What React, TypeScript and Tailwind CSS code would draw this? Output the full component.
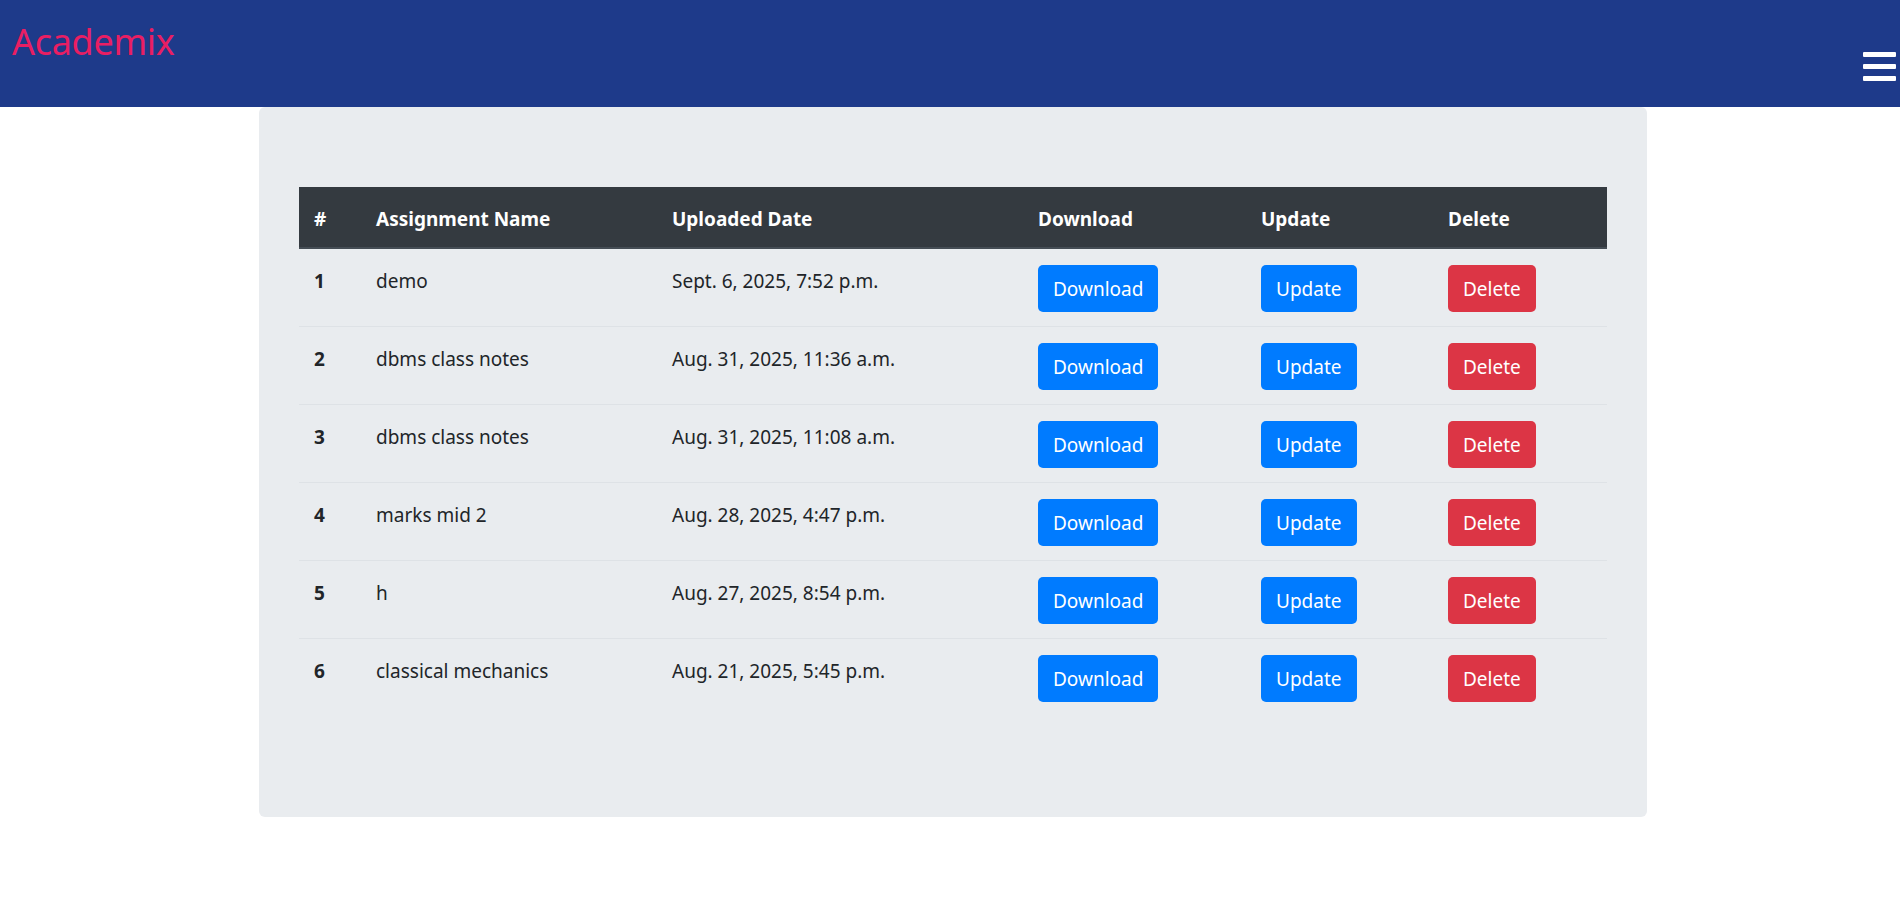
const rows = [
  { id: 1, name: 'demo', date: 'Sept. 6, 2025, 7:52 p.m.' },
  { id: 2, name: 'dbms class notes', date: 'Aug. 31, 2025, 11:36 a.m.' },
  { id: 3, name: 'dbms class notes', date: 'Aug. 31, 2025, 11:08 a.m.' },
  { id: 4, name: 'marks mid 2', date: 'Aug. 28, 2025, 4:47 p.m.' },
  { id: 5, name: 'h', date: 'Aug. 27, 2025, 8:54 p.m.' },
  { id: 6, name: 'classical mechanics', date: 'Aug. 21, 2025, 5:45 p.m.' },
];

export default function App() {
  return (
    <div className="min-h-screen bg-white font-['Noto_Sans',sans-serif] text-[#212529]">
      {/* Navbar */}
      <header className="flex h-[107px] items-start justify-between bg-[#1e3a8a]">
        <div className="pl-[12px] pt-[14px] text-[36px] leading-[56px] tracking-[-0.3px] text-[#e91e63]">Academix</div>
        <button className="mr-[4px] mt-[52px] flex flex-col gap-[7px]">
          <span className="block h-[5px] w-[33px] rounded-[1px] bg-white" />
          <span className="block h-[5px] w-[33px] rounded-[1px] bg-white" />
          <span className="block h-[5px] w-[33px] rounded-[1px] bg-white" />
        </button>
      </header>

      {/* Card */}
      <div className="ml-[259px] w-[1388px] rounded-[6px] bg-[#e9ecef] px-[40px] pb-[101px] pt-[80px]">
        <table className="w-[1308px] table-fixed border-collapse text-[19px] leading-[30px]">
          <colgroup>
            <col className="w-[62px]" />
            <col className="w-[296px]" />
            <col className="w-[366px]" />
            <col className="w-[223px]" />
            <col className="w-[187px]" />
            <col className="w-[174px]" />
          </colgroup>
          <thead>
            <tr className="border-b-2 border-[#454d55] bg-[#343a40] text-left font-bold text-white">
              <th className="px-[15px] pb-[13px] pt-[17px]">#</th>
              <th className="px-[15px] pb-[13px] pt-[17px]">Assignment Name</th>
              <th className="px-[15px] pb-[13px] pt-[17px]">Uploaded Date</th>
              <th className="px-[15px] pb-[13px] pt-[17px]">Download</th>
              <th className="px-[15px] pb-[13px] pt-[17px]">Update</th>
              <th className="px-[15px] pb-[13px] pt-[17px]">Delete</th>
            </tr>
          </thead>
          <tbody>
            {rows.map((r, i) => (
              <tr key={r.id} className={i > 0 ? 'border-t border-[#dee2e6]' : ''}>
                <td className="px-[15px] pb-[13px] pt-[17px] align-top font-bold">{r.id}</td>
                <td className="px-[15px] pb-[13px] pt-[17px] align-top">{r.name}</td>
                <td className="px-[15px] pb-[13px] pt-[17px] align-top">{r.date}</td>
                <td className="px-[15px] pb-[14px] pt-[16px] align-top">
                  <button className="h-[47px] rounded-[5px] bg-[#007bff] px-[15px] text-white">Download</button>
                </td>
                <td className="px-[15px] pb-[14px] pt-[16px] align-top">
                  <button className="h-[47px] rounded-[5px] bg-[#007bff] px-[15px] text-white">Update</button>
                </td>
                <td className="px-[15px] pb-[14px] pt-[16px] align-top">
                  <button className="h-[47px] rounded-[5px] bg-[#dc3545] px-[15px] text-white">Delete</button>
                </td>
              </tr>
            ))}
          </tbody>
        </table>
      </div>
    </div>
  );
}
